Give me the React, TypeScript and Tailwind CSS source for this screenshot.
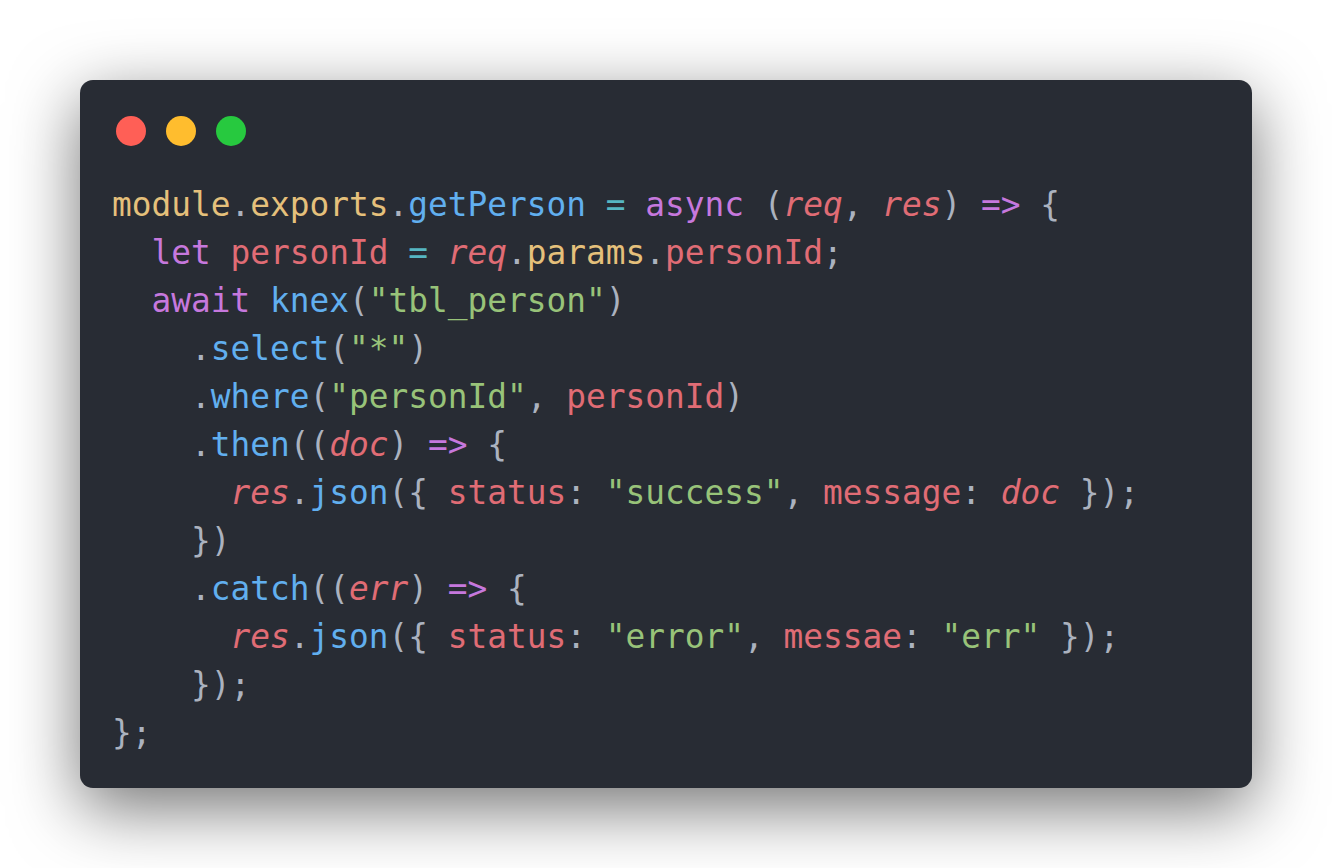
import React from "react";

type Tok = [string, string];

const Y = "text-[#e5c07b]";
const G = "text-[#abb2bf]";
const B = "text-[#61afef]";
const C = "text-[#56b6c2]";
const P = "text-[#c678dd]";
const R = "text-[#e06c75]";
const RI = "text-[#e06c75] italic";
const S = "text-[#98c379]";

const lines: Tok[][] = [
  [["module", Y], [".", G], ["exports", Y], [".", G], ["getPerson", B], [" ", G], ["=", C], [" ", G], ["async", P], [" (", G], ["req", RI], [", ", G], ["res", RI], [") ", G], ["=>", P], [" {", G]],
  [["  ", G], ["let", P], [" ", G], ["personId", R], [" ", G], ["=", C], [" ", G], ["req", RI], [".", G], ["params", Y], [".", G], ["personId", R], [";", G]],
  [["  ", G], ["await", P], [" ", G], ["knex", B], ["(", G], ['"tbl_person"', S], [")", G]],
  [["    .", G], ["select", B], ["(", G], ['"*"', S], [")", G]],
  [["    .", G], ["where", B], ["(", G], ['"personId"', S], [", ", G], ["personId", R], [")", G]],
  [["    .", G], ["then", B], ["((", G], ["doc", RI], [") ", G], ["=>", P], [" {", G]],
  [["      ", G], ["res", RI], [".", G], ["json", B], ["({ ", G], ["status", R], [": ", G], ['"success"', S], [", ", G], ["message", R], [": ", G], ["doc", RI], [" });", G]],
  [["    })", G]],
  [["    .", G], ["catch", B], ["((", G], ["err", RI], [") ", G], ["=>", P], [" {", G]],
  [["      ", G], ["res", RI], [".", G], ["json", B], ["({ ", G], ["status", R], [": ", G], ['"error"', S], [", ", G], ["messae", R], [": ", G], ['"err"', S], [" });", G]],
  [["    });", G]],
  [["};", G]],
];

export default function App() {
  return (
    <div className="w-[1332px] h-[868px] bg-white pt-[80px] pl-[80px]">
      <div className="w-[1172px] h-[708px] bg-[#282c34] rounded-[13px] shadow-[0_20px_68px_rgba(0,0,0,0.55)] flex flex-col">
        <div className="flex gap-[20px] pt-[36px] pl-[36px]">
          <div className="w-[30px] h-[30px] rounded-full bg-[#ff5f56]" />
          <div className="w-[30px] h-[30px] rounded-full bg-[#ffbd2e]" />
          <div className="w-[30px] h-[30px] rounded-full bg-[#27c93f]" />
        </div>
        <pre className="mt-[35px] pl-[32px] font-['DejaVu_Sans_Mono',monospace] text-[32.8px] leading-[48px]">
          {lines.map((line, i) => (
            <div key={i} className="h-[48px] whitespace-pre">
              {line.map(([t, c], j) => (
                <span key={j} className={c}>
                  {t}
                </span>
              ))}
            </div>
          ))}
        </pre>
      </div>
    </div>
  );
}
